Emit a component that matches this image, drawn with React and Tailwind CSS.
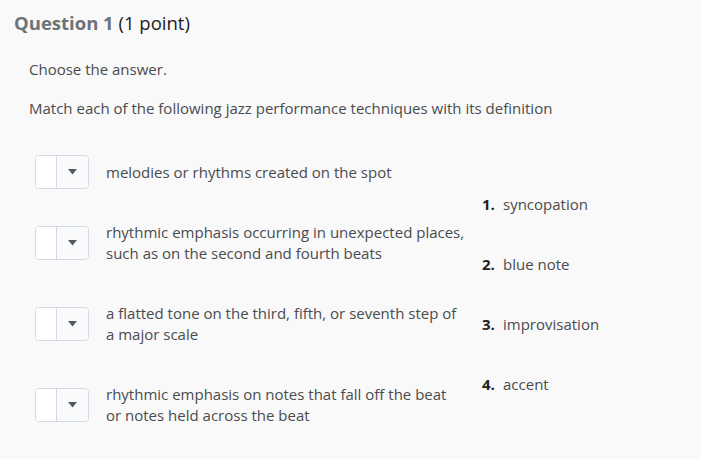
import React from "react";

const rows = [
  { lines: ["melodies or rhythms created on the spot"], mt: "mt-0", h: "h-[34px]" },
  { lines: ["rhythmic emphasis occurring in unexpected places,", "such as on the second and fourth beats"], mt: "mt-[33px]", h: "h-[42px]" },
  { lines: ["a flatted tone on the third, fifth, or seventh step of", "a major scale"], mt: "mt-[39px]", h: "h-[42px]" },
  { lines: ["rhythmic emphasis on notes that fall off the beat", "or notes held across the beat"], mt: "mt-[39px]", h: "h-[42px]" },
];

const options = ["syncopation", "blue note", "improvisation", "accent"];

function Dropdown() {
  return (
    <div className="flex h-[34px] w-[54px] shrink-0 overflow-hidden rounded-[4px] border border-[#d3d9e3] bg-white">
      <div className="w-[20px] bg-white" />
      <div className="flex flex-1 items-center justify-center border-l border-[#d3d9e3] bg-[#f9fafb]">
        <svg width="9" height="6" viewBox="0 0 9 6">
          <path d="M0 0 H9 L4.5 5.5 Z" fill="#565a5c" />
        </svg>
      </div>
    </div>
  );
}

export default function App() {
  return (
    <div
      className="h-[459px] w-[701px] overflow-hidden bg-[#f9f9f9] text-[#494c4e]"
      style={{ fontFamily: "'Open Sans', sans-serif", fontVariantLigatures: "none" }}
    >
      <div className="pl-[14px] pt-[9px] text-[18.5px] leading-[28px]">
        <span className="font-bold text-[#6e7376]">Question 1</span>{" "}
        <span className="text-[#202122]">(1 point)</span>
      </div>
      <div className="pl-[29px] pt-[22px] text-[15px] leading-[21px]">
        <p>Choose the answer.</p>
        <p className="mt-[18px]">Match each of the following jazz performance techniques with its definition</p>
      </div>
      <div className="flex pl-[35px] pt-[36px]">
        <div className="flex w-[447px] flex-col">
          {rows.map((r, i) => (
            <div key={i} className={`flex items-center ${r.mt} ${r.h}`}>
              <Dropdown />
              <div className="ml-[17px] text-[15px] leading-[21px]">
                {r.lines.map((l, j) => (
                  <div key={j}>{l}</div>
                ))}
              </div>
            </div>
          ))}
        </div>
        <div className="flex flex-col gap-[39px] pt-[39px] text-[15px] leading-[21px]">
          {options.map((o, i) => (
            <div key={i} className="flex">
              <span className="w-[21px] font-bold text-[#202122]">{i + 1}.</span>
              <span>{o}</span>
            </div>
          ))}
        </div>
      </div>
    </div>
  );
}
